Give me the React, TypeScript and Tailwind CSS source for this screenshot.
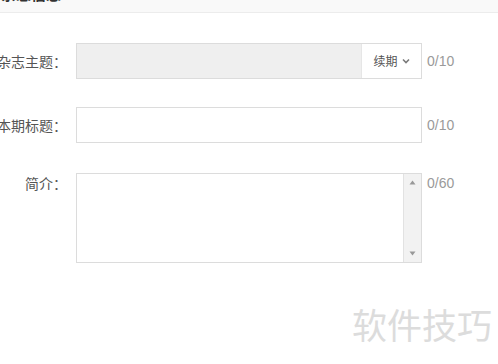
import React from 'react'

const cjk = { fontFamily: '"Noto Sans CJK SC", "Noto Sans", sans-serif' }
const latin = { fontFamily: '"Liberation Sans", Arial, sans-serif' }

function Label({ text }: { text: string }) {
  return (
    <div className="w-[67px] shrink-0 flex justify-end">
      <span className="shrink-0 whitespace-nowrap text-[14px] leading-[20px] text-[#555]" style={cjk}>
        {text}
      </span>
    </div>
  )
}

function Counter({ text }: { text: string }) {
  return (
    <span className="ml-[5px] text-[14px] leading-[20px] text-[#9a9a9a]" style={latin}>
      {text}
    </span>
  )
}

export default function App() {
  return (
    <div className="relative w-[498px] h-[364px] overflow-hidden bg-white">
      {/* Section header, mostly scrolled out of view */}
      <div className="h-[13px] overflow-hidden bg-[#f9f9f9] border-b border-[#ececec]">
        <p className="-mt-[16px] pl-[1px] text-[15px] leading-[20px] font-bold text-[#333]" style={cjk}>
          杂志信息
        </p>
      </div>

      <div className="pt-[30px]">
        {/* Magazine subject */}
        <div className="flex items-center">
          <Label text="杂志主题：" />
          <div className="ml-[9px] w-[346px] h-[36px] flex border border-[#dcdcdc] bg-[#efefef]">
            <div className="flex-1" />
            <div className="w-[60px] flex items-center justify-center gap-[4px] bg-white border-l border-[#e6e6e6]">
              <span className="text-[12px] text-[#555]" style={cjk}>续期</span>
              <svg width="8" height="6" viewBox="0 0 8 6" fill="none">
                <path d="M1 1.5 L4 4.5 L7 1.5" stroke="#7a7a7a" strokeWidth="1.6" />
              </svg>
            </div>
          </div>
          <Counter text="0/10" />
        </div>

        {/* Issue title */}
        <div className="flex items-center mt-[28px]">
          <Label text="本期标题：" />
          <div className="ml-[9px] w-[346px] h-[36px] border border-[#dcdcdc] bg-white" />
          <Counter text="0/10" />
        </div>

        {/* Summary */}
        <div className="flex items-start mt-[30px]">
          <Label text="简介：" />
          <div className="ml-[9px] w-[346px] h-[90px] flex border border-[#dcdcdc] bg-white">
            <div className="flex-1" />
            <div className="w-[18px] flex flex-col bg-[#f2f2f2] border-l border-[#e2e2e2]">
              <div className="h-[17px] flex items-center justify-center">
                <svg width="7" height="5" viewBox="0 0 7 5">
                  <path d="M3.5 0.5 L6.5 4.5 L0.5 4.5 Z" fill="#999" />
                </svg>
              </div>
              <div className="flex-1" />
              <div className="h-[17px] flex items-center justify-center">
                <svg width="7" height="5" viewBox="0 0 7 5">
                  <path d="M0.5 0.5 L6.5 0.5 L3.5 4.5 Z" fill="#999" />
                </svg>
              </div>
            </div>
          </div>
          <Counter text="0/60" />
        </div>
      </div>

      {/* Watermark */}
      <div className="absolute left-[352px] top-[302px] text-[35px] leading-[44px] text-[#dcdcdc] whitespace-nowrap" style={cjk}>
        软件技巧
      </div>
    </div>
  )
}
